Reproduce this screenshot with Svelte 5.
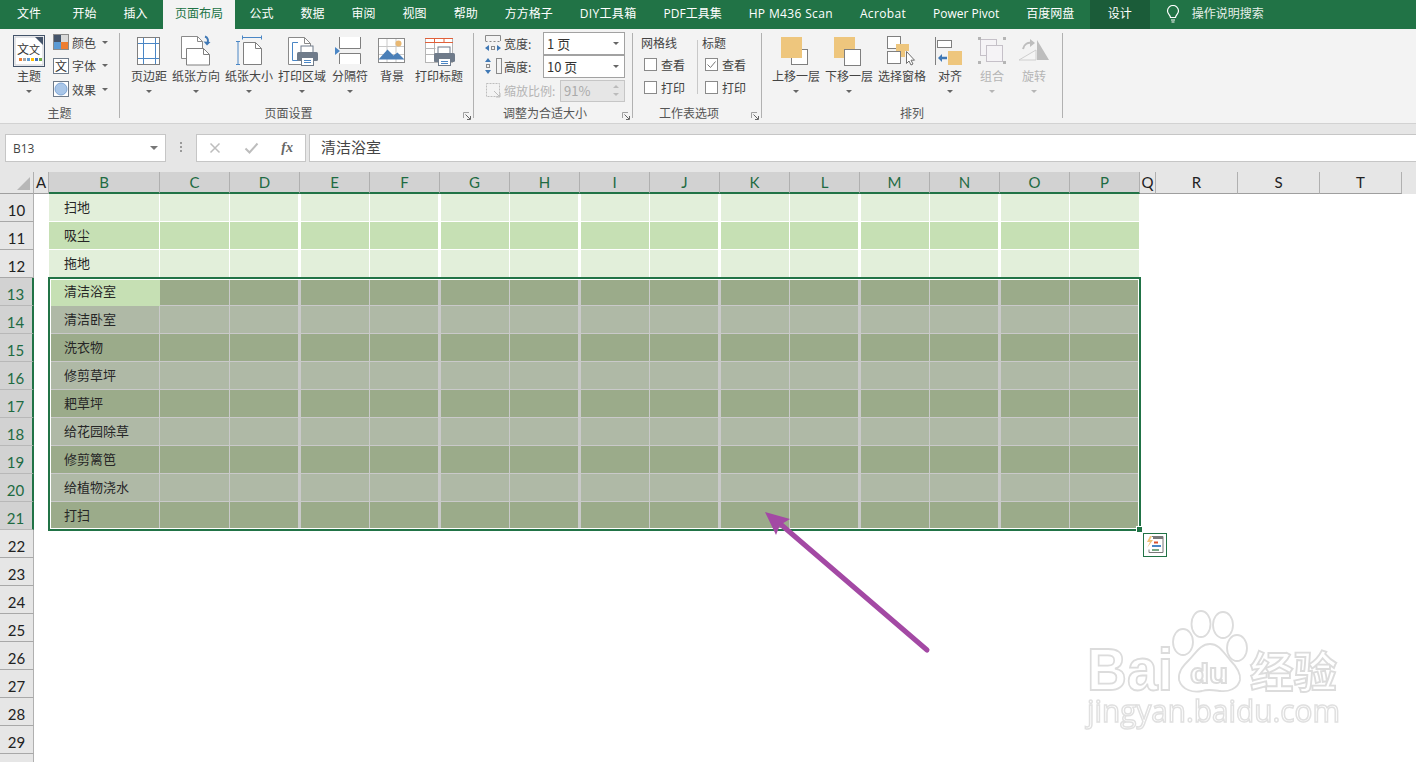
<script>
	const tabs = ['文件', '开始', '插入', '页面布局', '公式', '数据', '审阅', '视图', '帮助', '方方格子', 'DIY工具箱', 'PDF工具集', 'HP M436 Scan', 'Acrobat', 'Power Pivot', '百度网盘'];
	const spaced = ['DIY工具箱', 'HP M436 Scan', 'Acrobat'];
	const dataCols = ['C', 'D', 'E', 'F', 'G', 'H', 'I', 'J', 'K', 'L', 'M', 'N', 'O', 'P'];
	const tasks = { 10: '扫地', 11: '吸尘', 12: '拖地', 13: '清洁浴室', 14: '清洁卧室', 15: '洗衣物', 16: '修剪草坪', 17: '耙草坪', 18: '给花园除草', 19: '修剪篱笆', 20: '给植物浇水', 21: '打扫' };
	const rows = Array.from({ length: 21 }, (_, i) => i + 10);
	const isSel = (r) => r >= 13 && r <= 21;
	// D F H ... have the thick right edge, the next column a 1px left edge
	const thick = (i) => i < 13 && i % 2 === 1;
	const afterThick = (i) => i > 0 && i % 2 === 0;
</script>

{#snippet launcher()}
	<svg class="launcher" width="8" height="8" viewBox="0 0 8 8" fill="none">
		<path d="M.5 6V.5H6" stroke="#a0a0a0" />
		<path d="M2.500 2.500l4.500 4.500M7.500 4v3.500H4" stroke="#666" />
	</svg>
{/snippet}

<div class="page">
	<div class="tabbar">
		{#each tabs as t, i}
			<div class="tab" class:first={i === 0} class:active={t === '页面布局'} class:latin={spaced.includes(t)}>{t}</div>
		{/each}
		<div class="tab design">设计</div>
		<svg class="bulb" width="14" height="18" viewBox="0 0 14 18" fill="none" stroke="#fff" stroke-width="1.2">
			<path d="M4.500 12.500C4.500 10 1.500 9 1.500 6a5.500 5.500 0 0 1 11 0c0 3-3 4-3 6.500z" />
			<path d="M5 15h4M5.500 17h3" />
		</svg>
		<div class="search">操作说明搜索</div>
	</div>

	<div class="ribbon">
		<section class="group g1">
			<div class="body">
				<div class="big w48">
					<svg width="34" height="32" viewBox="0 0 34 32">
						<rect x="1.500" y="1.500" width="31" height="31" fill="#fff" stroke="#44546a" />
						<rect x="3" y="3" width="28" height="28" fill="#fff" stroke="#c9ccd2" />
						<path d="M23 3h8v8z" fill="#44546a" />
						<text x="5" y="20" class="svgtxt" font-size="12">文</text>
						<text x="17" y="20" class="svgtxt" font-size="11">文</text>
						<rect x="7" y="24" width="3" height="3" fill="#ed7d31" />
						<rect x="11" y="24" width="3" height="3" fill="#a5a5a5" />
						<rect x="15" y="24" width="3" height="3" fill="#5b9bd5" />
						<rect x="19" y="24" width="3" height="3" fill="#ffc000" />
						<rect x="23" y="24" width="3" height="3" fill="#4472c4" />
						<rect x="27" y="24" width="3" height="3" fill="#70ad47" />
					</svg>
					<span class="lbl">主题</span>
					<i class="caret"></i>
				</div>
				<div class="stack">
					<div class="small">
						<svg width="16" height="16" viewBox="0 0 16 16">
							<rect x="0.500" y="0.500" width="15" height="15" fill="#fff" stroke="#8a8a8a" />
							<rect x="1" y="1" width="7" height="7" fill="#44546a" />
							<rect x="8" y="1" width="7" height="7" fill="#d9d9d9" />
							<rect x="1" y="8" width="7" height="7" fill="#5b9bd5" />
							<rect x="8" y="8" width="7" height="7" fill="#ed7d31" />
						</svg>
						<span>颜色</span><i class="caret side"></i>
					</div>
					<div class="small">
						<svg width="16" height="16" viewBox="0 0 16 16">
							<rect x="0.500" y="0.500" width="15" height="15" fill="#fff" stroke="#6f7b8a" />
							<text x="2" y="13" class="svgtxt" font-size="12">文</text>
						</svg>
						<span>字体</span><i class="caret side"></i>
					</div>
					<div class="small">
						<svg width="16" height="16" viewBox="0 0 16 16">
							<rect x="0.500" y="0.500" width="15" height="15" fill="#fff" stroke="#6f7b8a" />
							<circle cx="8" cy="8" r="6" fill="#a9c6e8" stroke="#7ea6d6" />
						</svg>
						<span>效果</span><i class="caret side"></i>
					</div>
				</div>
			</div>
			<div class="glabel">主题</div>
		</section>

		<section class="group g2">
			<div class="body">
				<div class="big w42">
					<svg width="36" height="32" viewBox="0 0 36 32" fill="none">
						<rect x="6.500" y="3.500" width="22" height="27" fill="#fff" stroke="#7f7f7f" />
						<path d="M12.500 4v26M24.500 4v26M7 9.500h21M7 24.500h21" stroke="#4a86c5" />
					</svg>
					<span class="lbl">页边距</span><i class="caret"></i>
				</div>
				<div class="big w52">
					<svg width="36" height="32" viewBox="0 0 36 32" fill="none">
						<path d="M3.500 2.500h16l5 5v17h-21z" fill="#fff" stroke="#8a8a8a" />
						<path d="M19.500 2.500v5h5" stroke="#8a8a8a" />
						<path d="M8.500 14.500h17l6 6v10.500h-23z" fill="#fff" stroke="#7f7f7f" />
						<path d="M25.500 14.500v6h6" stroke="#7f7f7f" />
						<path d="M27 2.500c3 1 3.500 4 2.500 6.500" stroke="#3f78b5" stroke-width="2" />
						<path d="M25.500 7.500l3.500 4 3.500-3.500z" fill="#3f78b5" />
					</svg>
					<span class="lbl">纸张方向</span><i class="caret"></i>
				</div>
				<div class="big w54">
					<svg width="36" height="32" viewBox="0 0 36 32" fill="none">
						<path d="M11.500 3.500h19M11.500 1.500v4M30.500 1.500v4M5 7.500h4M7 7.500v23M5 30.500h4" stroke="#4a86c5" />
						<path d="M12.500 8.500h12l6 6v16h-18z" fill="#fff" stroke="#7f7f7f" />
						<path d="M24.500 8.500v6h6" stroke="#7f7f7f" />
					</svg>
					<span class="lbl">纸张大小</span><i class="caret"></i>
				</div>
				<div class="big w52">
					<svg width="36" height="32" viewBox="0 0 36 32" fill="none">
						<path d="M4.500 3.500h16l6 6v21h-22z" fill="#fff" stroke="#8a8a8a" />
						<path d="M20.500 3.500v6h6" stroke="#8a8a8a" />
						<path d="M14 8.500H8.500v18H14" stroke="#4a86c5" />
						<rect x="17" y="12" width="12" height="7" fill="#fff" stroke="#6f7b8a" />
						<rect x="13" y="18" width="21" height="9" rx="1.500" fill="#6f7b8a" />
						<rect x="17.500" y="23.500" width="12" height="8" fill="#fff" stroke="#6f7b8a" />
						<path d="M20 26.500h7M20 28.500h7" stroke="#4a86c5" />
					</svg>
					<span class="lbl">打印区域</span><i class="caret"></i>
				</div>
				<div class="big w44">
					<svg width="36" height="32" viewBox="0 0 36 32" fill="none">
						<path d="M7.500 3v11.500h21V3" fill="#fff" stroke="#7f7f7f" />
						<path d="M7.500 30V19.500h21V30" fill="#fff" stroke="#7f7f7f" />
						<path d="M3 13l5 4-5 4z" fill="#4a86c5" />
					</svg>
					<span class="lbl">分隔符</span><i class="caret"></i>
				</div>
				<div class="big w40">
					<svg width="36" height="32" viewBox="0 0 36 32" fill="none">
						<rect x="4.500" y="4.500" width="26" height="24" fill="#fff" stroke="#8a8a8a" />
						<path d="M13 5v23M22 5v23M5 12.500h25M5 20.500h25" stroke="#c9c9c9" />
						<circle cx="24.500" cy="9.500" r="3" fill="#e9b872" />
						<path d="M4.500 25.500l9-10 6 6 4-3 7 7z" fill="#4a7fb8" />
					</svg>
					<span class="lbl">背景</span>
				</div>
				<div class="big w54">
					<svg width="36" height="32" viewBox="0 0 36 32" fill="none">
						<rect x="4.500" y="4.500" width="27" height="24" fill="#fff" stroke="#b5b5b5" />
						<path d="M4 4.500h28M4 8.500h28M13.500 4v5M23 4v5" stroke="#e0603a" />
						<path d="M13.500 9v19M4.500 14.500h10M4.500 20.500h10" stroke="#b5b5b5" />
						<rect x="17" y="13" width="12" height="7" fill="#fff" stroke="#6f7b8a" />
						<rect x="13" y="19" width="21" height="9" rx="1.500" fill="#6f7b8a" />
						<rect x="17.500" y="24.500" width="12" height="7" fill="#fff" stroke="#6f7b8a" />
						<path d="M20 27.500h7M20 29.500h7" stroke="#4a86c5" />
					</svg>
					<span class="lbl">打印标题</span>
				</div>
			</div>
			<div class="glabel off-center">页面设置</div>
			{@render launcher()}
		</section>

		<section class="group g3">
			<div class="body col">
				<div class="fit">
					<svg width="17" height="17" viewBox="0 0 17 17" fill="none">
						<path d="M.500 6V.500h15V6" stroke="#8a8a8a" />
						<path d="M.500 6.500h15" stroke="#8a8a8a" stroke-dasharray="2 2" />
						<path d="M0 13l4-3v6zM16 13l-4-3v6z" fill="#3f78b5" />
						<rect x="6.500" y="11.500" width="3" height="3" stroke="#8a8a8a" />
					</svg>
					<span class="fname">宽度:</span>
					<div class="select"><span class="val">1 页</span><i class="caret"></i></div>
				</div>
				<div class="fit">
					<svg width="17" height="17" viewBox="0 0 17 17" fill="none">
						<path d="M3 0l3 4H0zM3 16l3-4H0z" fill="#3f78b5" />
						<rect x="1.500" y="6.500" width="3" height="3" stroke="#8a8a8a" />
						<rect x="11.500" y=".500" width="5" height="15" stroke="#8a8a8a" />
					</svg>
					<span class="fname">高度:</span>
					<div class="select"><span class="val">10 页</span><i class="caret"></i></div>
				</div>
				<div class="fit dim">
					<svg width="17" height="17" viewBox="0 0 17 17" fill="none" stroke="#bdbdbd">
						<rect x="1.500" y="1.500" width="13" height="13" stroke-dasharray="2 1" />
						<path d="M9 9l6 6M15 11v4h-4" />
					</svg>
					<span class="fname">缩放比例:</span>
					<div class="select spin">
						<span class="val">91%</span>
						<span class="arrows"><i></i><i></i></span>
					</div>
				</div>
			</div>
			<div class="glabel off-center">调整为合适大小</div>
			{@render launcher()}
		</section>

		<section class="group g4">
			<div class="body opts">
				<div class="optcol">
					<div class="opthead">网格线</div>
					<div class="opt"><span class="box"></span>查看</div>
					<div class="opt"><span class="box"></span>打印</div>
				</div>
				<div class="optcol second">
					<div class="opthead">标题</div>
					<div class="opt">
						<span class="box">
							<svg width="13" height="13" viewBox="0 0 13 13" fill="none"><path d="M2.500 6.500l3 3 5-6" stroke="#777" /></svg>
						</span>查看
					</div>
					<div class="opt"><span class="box"></span>打印</div>
				</div>
			</div>
			<div class="glabel off-center">工作表选项</div>
			{@render launcher()}
		</section>

		<section class="group g5">
			<div class="body">
				<div class="big w52">
					<svg width="36" height="32" viewBox="0 0 36 32" fill="none">
						<rect x="13.500" y="15.500" width="16" height="15" fill="#fff" stroke="#7f7f7f" />
						<rect x="3" y="3" width="21" height="21" fill="#eec67d" />
					</svg>
					<span class="lbl">上移一层</span><i class="caret"></i>
				</div>
				<div class="big w54">
					<svg width="36" height="32" viewBox="0 0 36 32" fill="none">
						<rect x="3" y="3" width="21" height="21" fill="#eec67d" />
						<rect x="13.500" y="15.500" width="16" height="16" fill="#fff" stroke="#7f7f7f" />
					</svg>
					<span class="lbl">下移一层</span><i class="caret"></i>
				</div>
				<div class="big w52">
					<svg width="36" height="32" viewBox="0 0 36 32" fill="none">
						<rect x="3.500" y="2.500" width="13" height="12" fill="#fff" stroke="#7f7f7f" />
						<rect x="3.500" y="17.500" width="13" height="12" fill="#fff" stroke="#7f7f7f" />
						<path d="M12 10h13v7h-4v6h-4v-6h-5z" fill="#eec67d" />
						<path d="M22.500 17.500v12l2.500-2.500 2 4 2-1-2-3.800h3.500z" fill="#fff" stroke="#6f6f6f" />
					</svg>
					<span class="lbl">选择窗格</span><i class="caret hide"></i>
				</div>
				<div class="big w44">
					<svg width="36" height="32" viewBox="0 0 36 32" fill="none">
						<path d="M3.500 3v28" stroke="#7f7f7f" />
						<rect x="5.500" y="6.500" width="14" height="7" fill="#fff" stroke="#7f7f7f" />
						<rect x="16" y="17" width="14" height="14" fill="#eec67d" />
						<path d="M6 24l4-4v2.700h5v2.600h-5V28z" fill="#3f78b5" />
					</svg>
					<span class="lbl">对齐</span><i class="caret"></i>
				</div>
				<div class="big w40 off">
					<svg width="36" height="32" viewBox="0 0 36 32" fill="none" stroke="#c5c0c8">
						<rect x="6.500" y="5.500" width="16" height="16" fill="#f5f3f6" />
						<rect x="12.500" y="11.500" width="16" height="16" fill="#f5f3f6" />
						<path d="M4 3h3v3H4zM29 3h3v3h-3zM4 27h3v3H4zM29 27h3v3h-3z" fill="#b5b5b5" stroke="none" />
					</svg>
					<span class="lbl">组合</span><i class="caret"></i>
				</div>
				<div class="big w44 off">
					<svg width="36" height="32" viewBox="0 0 36 32" fill="none">
						<path d="M3 26l17-10v10z" fill="#f5f5f5" stroke="#cfcfcf" />
						<path d="M21 6v20h12z" fill="#bdbdbd" />
						<path d="M7 15c1-5 5-7 9-6" stroke="#bdbdbd" stroke-width="2" />
						<path d="M14 5l5 4-5 4z" fill="#bdbdbd" />
					</svg>
					<span class="lbl">旋转</span><i class="caret"></i>
				</div>
			</div>
			<div class="glabel">排列</div>
		</section>
	</div>

	<div class="fbar">
		<div class="namebox">B13<i class="caret big-caret"></i></div>
		<div class="grip"><i></i><i></i><i></i></div>
		<div class="fxbox">
			<svg width="12" height="12" viewBox="0 0 12 12" fill="none"><path d="M1.500 1.500l9 9M10.500 1.500l-9 9" stroke="#bdbdbd" stroke-width="1.500" /></svg>
			<svg width="15" height="12" viewBox="0 0 15 12" fill="none"><path d="M1.500 6.500l4 4 8-9" stroke="#bdbdbd" stroke-width="2" /></svg>
			<span class="fx">fx</span>
		</div>
		<div class="finput">清洁浴室</div>
	</div>

	<div class="sheet">
		<div class="colhead">
			<div class="corner"><i></i></div>
			<div class="ch a">A</div>
			<div class="ch b sel">B</div>
			{#each dataCols as c}
				<div class="ch sel">{c}</div>
			{/each}
			<div class="ch q">Q</div>
			<div class="ch r">R</div>
			<div class="ch r">S</div>
			<div class="ch r">T</div>
		</div>

		{#each rows as r}
			<div class="row">
				<div class="rh" class:sel={isSel(r)}>{r < 30 ? r : ''}</div>
				<div class="acol"></div>
				{#if tasks[r]}
					<div class="cell b" class:light={r % 2 === 0} class:mid={r % 2 === 1} class:dark={isSel(r)} class:active={r === 13}>{tasks[r]}</div>
					{#each dataCols as c, i}
						<div class="cell" class:light={r % 2 === 0} class:mid={r % 2 === 1} class:dark={isSel(r)} class:thick={thick(i)} class:after={afterThick(i)}></div>
					{/each}
				{/if}
			</div>
		{/each}

		<div class="selection"><i class="handle"></i></div>
		<div class="quick">
			<svg width="22" height="22" viewBox="0 0 22 22" fill="none">
				<path d="M8 2.500h11v16H5v-3" stroke="#7a7a7a" fill="#fff" />
				<path d="M9 2h10v3H9z" fill="#7a7a7a" />
				<path d="M6 2l-3 6h3l-3 6 6-8H6l2-4z" fill="#efc27a" />
				<path d="M10 7.500h4v2h-4z" fill="#d9502e" />
				<path d="M8 11h9v2H8z" fill="#4a86c5" />
				<path d="M8 15h7v2H8z" fill="#78a886" />
			</svg>
		</div>
	</div>

	<svg class="arrow" width="1416" height="762" viewBox="0 0 1416 762" fill="none">
		<path d="M927 650L778 522" stroke="#a349a4" stroke-width="5" stroke-linecap="round" />
		<path d="M765 512L790 519L780 525L776 535z" fill="#a349a4" />
	</svg>

	<svg class="mark" width="270" height="130" viewBox="1080 610 270 130">
		<g fill="#fff" stroke="#dcdcdc" stroke-width="1.800">
			<ellipse cx="1183" cy="642" rx="10" ry="13" />
			<ellipse cx="1201" cy="624" rx="9.500" ry="13" />
			<ellipse cx="1223" cy="625" rx="10" ry="13" />
			<ellipse cx="1237" cy="648" rx="10" ry="13" />
			<path d="M1210 644c9 0 13 8 20 16 7 7 11 13 10 20-2 9-12 12-20 11-7-1-12-2-18 0-9 2-20-1-23-11-1-8 3-13 10-20 7-7 11-16 21-16z" />
			<text x="1087" y="690" class="wm" font-size="60" textLength="86" lengthAdjust="spacingAndGlyphs">Bai</text>
			<text x="1190" y="683" class="wm" font-size="28" textLength="38" lengthAdjust="spacingAndGlyphs">du</text>
			<text x="1250" y="688" class="wm cn" font-size="43" textLength="87" lengthAdjust="spacingAndGlyphs">经验</text>
		</g>
		<text x="1087" y="722" class="wm thin" font-size="31" textLength="253" lengthAdjust="spacingAndGlyphs" fill="#fff" stroke="#e0e0e0">jingyan.baidu.com</text>
	</svg>
</div>

<style>
	:global(body) {
		margin: 0;
		background: #fff;
	}
	.page {
		position: relative;
		width: 1416px;
		height: 762px;
		overflow: hidden;
		font-family: "Noto Sans CJK SC", "Noto Sans", sans-serif;
		font-size: 12px;
		color: #444;
	}
	i {
		display: block;
	}

	/* tabs */
	.tabbar {
		display: flex;
		align-items: stretch;
		height: 29px;
		background: #217346;
		color: #fff;
		font-family: "Open Sans", "Noto Sans CJK SC", sans-serif;
		white-space: nowrap;
	}
	.tab {
		padding: 0 13.5px;
		line-height: 27px;
	}
	.tab.latin {
		letter-spacing: 0.35px;
	}
	.tab.first {
		padding: 0 17px 0 17px;
		margin-right: 1px;
	}
	.tab.active {
		background: #f3f3f3;
		color: #217346;
		padding: 0 12px;
		margin-left: 2px;
		margin-right: 1px;
	}
	.tab.design {
		background: #1b5c39;
		padding: 0 18px;
		margin-left: 2px;
	}
	.bulb {
		margin: 5px 0 0 16px;
	}
	.search {
		margin-left: 12px;
		line-height: 27px;
		color: #e6efe9;
	}

	/* ribbon */
	.ribbon {
		display: flex;
		height: 94px;
		background: #f3f3f3;
		border-bottom: 1px solid #d2d2d2;
	}
	.group {
		position: relative;
		box-sizing: border-box;
		height: 85px;
		margin-top: 4px;
		border-right: 1px solid #b1b1b1;
		flex: none;
	}
	.g1 { width: 120px; padding-left: 5px; }
	.g2 { width: 354px; padding-left: 8px; }
	.g3 { width: 159px; padding-left: 11px; }
	.g4 { width: 129px; padding-left: 8px; }
	.g5 { width: 301px; padding-left: 8px; }
	.body {
		display: flex;
		height: 71px;
	}
	.glabel {
		position: absolute;
		left: 0;
		right: 0;
		top: 71px;
		text-align: center;
		line-height: 18px;
		color: #555;
	}
	.glabel.off-center {
		right: 16px;
	}
	.launcher {
		position: absolute;
		right: 2px;
		top: 79px;
	}
	.big {
		display: flex;
		flex-direction: column;
		align-items: center;
		padding-top: 1px;
		flex: none;
	}
	.big svg {
		display: block;
		height: 32px;
		overflow: visible;
	}
	.w40 { width: 40px; }
	.w42 { width: 42px; }
	.w44 { width: 44px; }
	.w48 { width: 48px; }
	.w52 { width: 52px; }
	.w54 { width: 54px; }
	.lbl {
		margin-top: 2px;
		line-height: 16px;
		color: #444;
		white-space: nowrap;
	}
	.off .lbl {
		color: #b5b5b5;
	}
	.caret {
		width: 0;
		height: 0;
		border-left: 3px solid transparent;
		border-right: 3px solid transparent;
		border-top: 3px solid #666;
		margin-top: 6px;
	}
	.caret.hide {
		visibility: hidden;
	}
	.off .caret {
		border-top-color: #b5b5b5;
	}
	.stack {
		display: flex;
		flex-direction: column;
		gap: 7px;
		padding-top: 1px;
	}
	.small {
		display: flex;
		align-items: center;
		height: 16.500px;
		gap: 3px;
		color: #444;
	}
	.caret.side {
		margin: 0 0 0 3px;
	}

	/* fit to page */
	.col {
		flex-direction: column;
		gap: 0;
		margin-top: -1px;
	}
	.fit {
		display: flex;
		align-items: center;
		height: 23px;
		position: relative;
	}
	.fit.dim {
		margin-top: 1px;
	}
	.fit svg {
		flex: none;
		width: 17px;
	}
	.fname {
		margin-left: 2px;
		width: 39px;
		white-space: nowrap;
		line-height: 21px;
	}
	.select {
		box-sizing: border-box;
		display: flex;
		align-items: center;
		justify-content: space-between;
		width: 82px;
		height: 23px;
		background: #fff;
		border: 1px solid #a2a2a2;
		padding: 0 5px 0 3px;
		font-size: 13px;
		line-height: 19px;
		color: #333;
	}
	.select .caret {
		margin: 0;
	}
	.dim {
		color: #b5b5b5;
	}
	.dim .fname {
		width: 56px;
	}
	.select.spin {
		width: 65px;
		height: 22px;
		background: #e6e6e6;
		border-color: #c6c6c6;
		color: #aaa;
	}
	.arrows i {
		width: 0;
		height: 0;
		border-left: 3px solid transparent;
		border-right: 3px solid transparent;
		border-bottom: 3px solid #bbb;
		margin-bottom: 5px;
	}
	.arrows i + i {
		border-bottom: 0;
		border-top: 3px solid #bbb;
		margin: 0;
	}

	/* sheet options */
	.opts {
		gap: 0;
	}
	.optcol {
		width: 56px;
	}
	.optcol.second {
		position: relative;
		padding-left: 4px;
		border-left: 1px solid #c8c8c8;
		height: 54px;
		margin-top: 7px;
	}
	.opthead {
		line-height: 18px;
		margin: 1px 0 1px;
		color: #444;
	}
	.optcol.second .opthead {
		margin-top: -6px;
	}
	.opt {
		display: flex;
		align-items: center;
		gap: 4px;
		height: 23px;
		margin-left: 3px;
		color: #444;
	}
	.box {
		box-sizing: border-box;
		width: 13px;
		height: 13px;
		background: #fff;
		border: 1px solid #8a8a8a;
		display: block;
		flex: none;
		line-height: 0;
	}
	.box svg {
		margin: -1px;
	}

	/* formula bar */
	.fbar {
		box-sizing: border-box;
		display: flex;
		align-items: flex-start;
		height: 48px;
		padding: 10px 0 0 5px;
		background: #e6e6e6;
	}
	.namebox {
		box-sizing: border-box;
		display: flex;
		align-items: center;
		justify-content: space-between;
		width: 161px;
		height: 28px;
		padding: 0 7px;
		background: #fff;
		border: 1px solid #c6c6c6;
		font-family: "Open Sans", sans-serif;
		color: #444;
	}
	.big-caret {
		margin: 0;
		border-left-width: 4px;
		border-right-width: 4px;
		border-top-width: 4px;
		border-top-color: #777;
	}
	.grip {
		display: flex;
		flex-direction: column;
		gap: 2px;
		width: 30px;
		align-items: center;
		padding-top: 8px;
	}
	.grip i {
		width: 2px;
		height: 2px;
		background: #9a9a9a;
	}
	.fxbox {
		box-sizing: border-box;
		display: flex;
		align-items: center;
		justify-content: space-between;
		width: 110px;
		height: 28px;
		padding: 0 12px;
		background: #fff;
		border: 1px solid #c6c6c6;
	}
	.fx {
		font-family: "Liberation Serif", serif;
		font-style: italic;
		font-weight: 700;
		font-size: 14px;
		color: #666;
	}
	.finput {
		box-sizing: border-box;
		flex: 1;
		height: 28px;
		margin-left: 3px;
		padding-left: 11px;
		background: #fff;
		border: 1px solid #c6c6c6;
		border-right: 0;
		font-size: 15px;
		line-height: 24px;
		color: #444;
	}

	/* grid */
	.sheet {
		position: relative;
		height: 590px;
	}
	.colhead {
		display: flex;
		height: 22px;
		background: #e6e6e6;
	}
	.corner {
		position: relative;
		box-sizing: border-box;
		width: 34px;
		height: 22px;
		background: #e6e6e6;
		border-right: 1px solid #b0b0b0;
		border-bottom: 1px solid #9f9f9f;
	}
	.corner i {
		position: absolute;
		right: 3px;
		bottom: 3px;
		width: 0;
		height: 0;
		border-left: 13px solid transparent;
		border-bottom: 13px solid #b7b7b7;
	}
	.ch {
		box-sizing: border-box;
		flex: none;
		width: 70px;
		height: 22px;
		text-align: center;
		font-family: Lato, "Open Sans", sans-serif;
		font-size: 15px;
		line-height: 21px;
		color: #222;
		border-right: 1px solid #b0b0b0;
		border-bottom: 1px solid #9f9f9f;
	}
	.ch.sel {
		background: #d2d2d2;
		color: #1e6b42;
		border-bottom: 2px solid #217346;
		line-height: 20px;
	}
	.ch.a {
		width: 15px;
		background: #e6e6e6;
	}
	.ch.b {
		width: 111px;
	}
	.ch.q {
		width: 16px;
	}
	.ch.r {
		width: 82px;
	}
	.row {
		display: flex;
		height: 28px;
	}
	.rh {
		box-sizing: border-box;
		flex: none;
		width: 34px;
		height: 28px;
		background: #e6e6e6;
		border-right: 1px solid #b0b0b0;
		border-bottom: 1px solid #a8a8a8;
		text-align: center;
		font-family: Lato, "Open Sans", sans-serif;
		font-size: 15px;
		line-height: 33px;
		color: #222;
	}
	.rh.sel {
		background: #d2d2d2;
		color: #1e6b42;
		border-right: 2px solid #217346;
		border-bottom-color: #b8b8b8;
		padding-right: 1px;
	}
	.acol {
		flex: none;
		width: 15px;
	}
	.cell {
		box-sizing: border-box;
		flex: none;
		width: 70px;
		height: 28px;
		border-right: 1px solid #fff;
		border-bottom: 1px solid #fff;
		color: #262626;
		font-size: 13px;
		line-height: 26px;
	}
	.cell.b {
		width: 111px;
		padding-left: 15px;
	}
	.cell.light { background: #e2efda; }
	.cell.mid { background: #c6e0b4; }
	.cell.dark {
		border-color: #c9c9c9;
	}
	.cell.dark.light { background: #afb9a6; }
	.cell.dark.mid { background: #9bab8a; }
	.cell.dark.active {
		background: #c6e0b4;
		border-color: #c6e0b4;
	}
	.cell.thick {
		border-right-width: 2px;
	}
	.cell.after {
		border-left: 1px solid #fff;
	}
	.cell.dark.after {
		border-left-color: #c9c9c9;
	}

	.selection {
		position: absolute;
		left: 48px;
		top: 105px;
		width: 1093px;
		height: 254px;
		box-sizing: border-box;
		border: 2px solid #217346;
		box-shadow: inset 0 0 0 1px #fff;
		pointer-events: none;
	}
	.handle {
		position: absolute;
		right: -3px;
		bottom: -3px;
		width: 5px;
		height: 5px;
		background: #217346;
		border-left: 1px solid #fff;
		border-top: 1px solid #fff;
	}
	.quick {
		position: absolute;
		left: 1143px;
		top: 361px;
		box-sizing: border-box;
		width: 24px;
		height: 24px;
		border: 1px solid #217346;
		background: #fff;
		line-height: 0;
	}

	/* overlays */
	.arrow {
		position: absolute;
		left: 0;
		top: 0;
		pointer-events: none;
	}
	.mark {
		position: absolute;
		left: 1080px;
		top: 610px;
		filter: blur(0.6px);
	}
	.svgtxt {
		font-family: "Noto Sans CJK SC", sans-serif;
		fill: #333;
	}
	.wm {
		font-family: "Liberation Sans", sans-serif;
		font-weight: 700;
	}
	.wm.cn {
		font-family: "Noto Sans CJK SC", sans-serif;
	}
	.wm.thin {
		font-family: "Open Sans", sans-serif;
		font-weight: 400;
		stroke-width: 1.5px;
	}
</style>
